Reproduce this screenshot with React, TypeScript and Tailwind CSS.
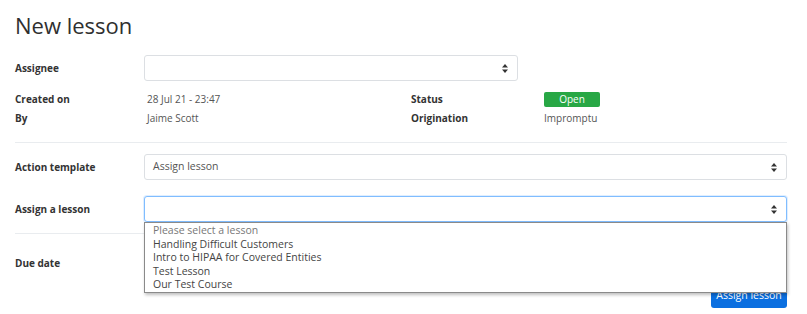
import React from "react";

const lessons = [
  "Please select a lesson",
  "Handling Difficult Customers",
  "Intro to HIPAA for Covered Entities",
  "Test Lesson",
  "Our Test Course",
];

function Arrows() {
  return (
    <svg width="6" height="9" viewBox="0 0 6 9" className="shrink-0">
      <path d="M0 3.5 L3 0 L6 3.5 Z" fill="#333" />
      <path d="M0 5.5 L3 9 L6 5.5 Z" fill="#333" />
    </svg>
  );
}

function FakeSelect({ value, focused, className }: { value?: string; focused?: boolean; className?: string }) {
  return (
    <div
      className={
        "h-[26px] flex items-center justify-between pl-[8px] pr-[9px] rounded-[3px] bg-white border text-[10.5px] text-[#555] " +
        (focused ? "border-[#80bdff] shadow-[0_0_0_1px_rgba(128,189,255,0.25)] " : "border-[#dcdfe3] ") +
        (className ?? "")
      }
    >
      <span>{value ?? ""}</span>
      <Arrows />
    </div>
  );
}

export default function App() {
  return (
    <div className="w-[807px] h-[314px] overflow-hidden bg-white pl-[15px] pr-[20px] font-['Open_Sans',sans-serif] text-[#333]">
      <h1 className="pt-[10px] h-[55px] text-[22px] leading-[30px] font-normal text-[#2f2f2f]">New lesson</h1>

      {/* Assignee */}
      <div className="flex items-center h-[26px]">
        <div className="w-[129px] text-[10px] font-bold">Assignee</div>
        <FakeSelect className="w-[374px]" />
      </div>

      {/* Meta */}
      <div className="mt-[9px] grid grid-cols-[132px_264px_133px_1fr] text-[10px] leading-[19px]">
        <div className="font-bold">Created on</div>
        <div className="text-[#555]">28 Jul 21 - 23:47</div>
        <div className="font-bold">Status</div>
        <div className="flex items-center">
          <span className="w-[56px] h-[15px] rounded-[2px] bg-[#28a745] text-white text-[10px] leading-[15px] text-center">
            Open
          </span>
        </div>
        <div className="font-bold">By</div>
        <div className="text-[#555]">Jaime Scott</div>
        <div className="font-bold">Origination</div>
        <div className="text-[#555]">Impromptu</div>
      </div>

      <div className="mt-[14px] border-t border-[#e9ecef]" />

      {/* Action template */}
      <div className="mt-[11px] flex items-center">
        <div className="w-[129px] text-[10px] font-bold">Action template</div>
        <FakeSelect value="Assign lesson" className="flex-1" />
      </div>

      {/* Assign a lesson */}
      <div className="mt-[16px] flex items-center relative">
        <div className="w-[129px] text-[10px] font-bold">Assign a lesson</div>
        <FakeSelect focused className="flex-1" />
        <div className="absolute z-10 left-[129px] right-0 top-[26px] bg-white border border-[#8a8a8a] shadow-[1px_2px_3px_rgba(0,0,0,0.25)] pl-[8px] pt-[1px] pb-0 text-[10.5px] leading-[13.5px] text-[#444]">
          {lessons.map((l, i) => (
            <div key={l} className={i === 0 ? "text-[#777]" : ""}>
              {l}
            </div>
          ))}
        </div>
      </div>

      <div className="mt-[11px] border-t border-[#e9ecef]" />

      {/* Due date */}
      <div className="mt-[16px] flex items-center">
        <div className="w-[129px] text-[10px] font-bold">Due date</div>
        <div className="flex-1 h-[26px] rounded-[3px] border border-[#dcdfe3]" />
      </div>

      <div className="mt-[8px] flex justify-end">
        <button className="h-[24px] w-[76px] rounded-[3px] bg-[#0b6fe0] text-white text-[10.5px]">Assign lesson</button>
      </div>
    </div>
  );
}
